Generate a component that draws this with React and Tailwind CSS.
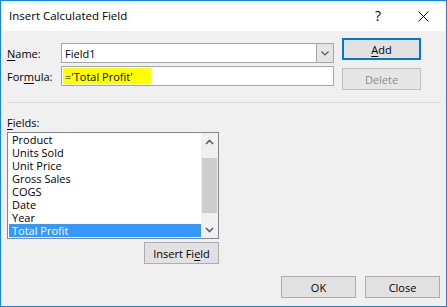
import React from "react";

const font = { fontFamily: '"Segoe UI", "Open Sans", "Noto Sans", sans-serif' };

function Btn({ children, className = "", disabled = false, primary = false }) {
  return (
    <div
      className={
        "h-[22px] w-[75px] flex items-center justify-center text-[11px] leading-none " +
        (primary
          ? "border-2 border-[#0078d7] bg-[#e1e1e1] text-black "
          : disabled
          ? "border border-[#bfbfbf] bg-[#e6e6e6] text-[#8d8d8d] "
          : "border border-[#adadad] bg-[#e1e1e1] text-black ") +
        className
      }
    >
      {children}
    </div>
  );
}

const items = ["Product", "Units Sold", "Unit Price", "Gross Sales", "COGS", "Date", "Year", "Total Profit"];

export default function App() {
  return (
    <div
      className="w-[447px] h-[307px] border border-[#1883d7] flex flex-col bg-[#f0f0f0] text-black overflow-hidden"
      style={font}
    >
      {/* title bar */}
      <div className="h-[30px] bg-white flex items-center shrink-0">
        <div className="pl-[8px] text-[11.5px] leading-none flex-1">Insert Calculated Field</div>
        <div className="w-[20px] text-[14px] leading-none text-center mr-[30px]">?</div>
        <svg width="11" height="11" viewBox="0 0 11 11" className="mr-[17px]">
          <path d="M0.5 0.5 L10.5 10.5 M10.5 0.5 L0.5 10.5" stroke="#000" strokeWidth="1" fill="none" />
        </svg>
      </div>

      {/* body */}
      <div className="flex-1 flex flex-col pl-[6px] text-[11px] leading-none">
        {/* top */}
        <div className="flex pt-[7px]">
          <div className="flex flex-col mt-[5px] gap-[3px]">
            <div className="flex items-center h-[20px]">
              <div className="w-[54px]"><span className="underline underline-offset-2">N</span>ame:</div>
              <div className="w-[273px] h-[20px] border border-[#a5a5a5] bg-white flex">
                <div className="flex-1 flex items-center pl-[3px]">Field1</div>
                <div className="w-[17px] h-full bg-[#e5e5e5] border-l border-[#a5a5a5] flex items-center justify-center">
                  <svg width="8" height="5" viewBox="0 0 8 5">
                    <path d="M0.5 0.5 L4 4 L7.5 0.5" stroke="#555" strokeWidth="1.1" fill="none" />
                  </svg>
                </div>
              </div>
            </div>
            <div className="flex items-center h-[20px]">
              <div className="w-[54px]">For<span className="underline underline-offset-2">m</span>ula:</div>
              <div className="w-[273px] h-[20px] border border-[#a5a5a5] bg-white p-px flex">
                <div className="w-[88px] h-full bg-[#ffff00] flex items-center pl-[2px]">='Total Profit'</div>
              </div>
            </div>
          </div>
          <div className="flex flex-col gap-[8px] ml-[8px]">
            <Btn primary className="w-[79px]"><span><span className="underline underline-offset-2">A</span>dd</span></Btn>
            <Btn disabled className="w-[79px]">Delete</Btn>
          </div>
        </div>

        {/* separator */}
        <div className="mt-[12px] h-px w-[434px] bg-[#dadada]" />

        {/* fields label */}
        <div className="mt-[12px] h-[15px] flex items-center">
          <span><span className="underline underline-offset-2">F</span>ields:</span>
        </div>

        {/* listbox + insert */}
        <div className="flex flex-col w-[212px] mt-[2px]">
          <div className="h-[107px] border border-[#828790] bg-white flex">
            <div className="flex-1 flex flex-col pl-px">
              {items.map((it, i) => (
                <div
                  key={it}
                  className={
                    "h-[13px] flex items-center pl-[3px] leading-[13px] " +
                    (i === items.length - 1 ? "bg-[#3399ff] text-white" : "")
                  }
                >
                  {it}
                </div>
              ))}
            </div>
            <div className="w-[17px] bg-[#f0f0f0] flex flex-col">
              <div className="h-[17px] flex items-center justify-center">
                <svg width="9" height="6" viewBox="0 0 9 6">
                  <path d="M1 5 L4.5 1.5 L8 5" stroke="#606060" strokeWidth="1.6" fill="none" />
                </svg>
              </div>
              <div className="flex-1 flex flex-col py-[8px]">
                <div className="mx-px flex-1 bg-[#cdcdcd]" />
              </div>
              <div className="h-[17px] flex items-center justify-center">
                <svg width="9" height="6" viewBox="0 0 9 6">
                  <path d="M1 1 L4.5 4.5 L8 1" stroke="#606060" strokeWidth="1.6" fill="none" />
                </svg>
              </div>
            </div>
          </div>
          <div className="flex justify-end mt-[3px]">
            <Btn>
              <span>Insert Fi<span className="underline underline-offset-2">e</span>ld</span>
            </Btn>
          </div>
        </div>

        {/* bottom buttons */}
        <div className="flex justify-end gap-[9px] mt-[12px] pr-[6px]">
          <Btn>OK</Btn>
          <Btn>Close</Btn>
        </div>
      </div>
    </div>
  );
}
